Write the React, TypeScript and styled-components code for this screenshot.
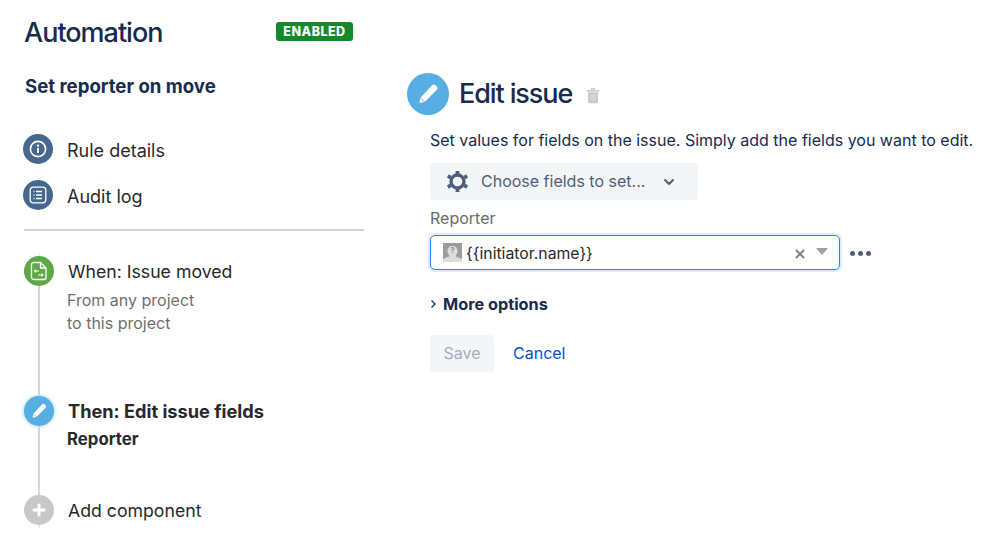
import React from "react";
import styled, { createGlobalStyle } from "styled-components";

const GlobalStyle = createGlobalStyle`
  html, body {
    margin: 0;
    padding: 0;
    background: #fff;
  }
  body {
    font-family: Inter, "Noto Sans", sans-serif;
    color: #172b4d;
  }
`;

const Page = styled.div`
  display: flex;
  width: 999px;
  height: 535px;
  overflow: hidden;
  box-sizing: border-box;
`;

const Sidebar = styled.aside`
  width: 340px;
  margin-left: 24px;
  flex: none;
  display: flex;
  flex-direction: column;
`;

const SidebarHead = styled.div`
  display: flex;
  align-items: center;
  justify-content: space-between;
  height: 32px;
  margin-top: 17px;
  padding-right: 11px;
`;

const PageTitle = styled.h1`
  margin: 0;
  font-size: 27px;
  line-height: 32px;
  font-weight: 500;
  letter-spacing: -1px;
  color: #172b4d;
`;

const Badge = styled.span`
  display: flex;
  align-items: center;
  justify-content: center;
  width: 77px;
  height: 19px;
  margin-top: -4px;
  border-radius: 3px;
  background: #14892c;
  color: #fff;
  font-size: 12.5px;
  font-weight: 800;
  letter-spacing: 0.5px;
`;

const RuleName = styled.h2`
  margin: 25px 0 0 1px;
  font-size: 18.6px;
  line-height: 24px;
  font-weight: 700;
  color: #172b4d;
`;

const NavList = styled.nav`
  display: flex;
  flex-direction: column;
  gap: 16px;
  margin: 36px 0 0 -1px;
`;

const NavItem = styled.div`
  display: flex;
  align-items: center;
  gap: 14px;
  height: 30px;
  font-size: 18px;
  color: #292929;
`;

const NavLabel = styled.span`
  padding-top: 2px;
`;

const NavDot = styled.span`
  width: 30px;
  height: 30px;
  flex: none;
  border-radius: 50%;
  background: #46688c;
  display: flex;
  align-items: center;
  justify-content: center;
`;

const Divider = styled.hr`
  width: 100%;
  height: 2px;
  margin: 19px 0 0;
  border: 0;
  background: #d2d2d2;
`;

const Timeline = styled.div`
  display: flex;
  flex-direction: column;
  margin: 22px 0 0;
`;

const Step = styled.div<{ $height: number }>`
  display: flex;
  gap: 14px;
  height: ${p => p.$height}px;
`;

const Rail = styled.div`
  width: 30px;
  flex: none;
  display: flex;
  flex-direction: column;
  align-items: center;
`;

const RailLine = styled.span`
  flex: 1;
  width: 2px;
  background: #d6d6d6;
`;

const RailStub = styled.span`
  height: 3px;
  flex: none;
  width: 1px;
  background: #e4e4e4;
`;

const StepDot = styled.span<{ $color: string; $glow?: boolean }>`
  width: 30px;
  height: 30px;
  flex: none;
  border-radius: 50%;
  background: ${p => p.$color};
  box-shadow: ${p => (p.$glow ? "0 0 3px 1px #b5def5" : "none")};
  display: flex;
  align-items: center;
  justify-content: center;
`;

const StepBody = styled.div<{ $top?: number }>`
  display: flex;
  flex-direction: column;
  padding-top: ${p => p.$top ?? 0}px;
`;

const StepTitle = styled.div<{ $bold?: boolean }>`
  height: 30px;
  font-size: ${p => (p.$bold ? 18.2 : 17.7)}px;
  line-height: 30px;
  font-weight: ${p => (p.$bold ? 700 : 400)};
  color: #292929;
`;

const StepNote = styled.div<{ $bold?: boolean }>`
  margin-left: -1px;
  margin-top: 2px;
  font-size: ${p => (p.$bold ? 16.8 : 16)}px;
  line-height: 23px;
  font-weight: ${p => (p.$bold ? 700 : 400)};
  color: ${p => (p.$bold ? "#292929" : "#6f6f6f")};
`;

const Main = styled.main`
  margin-left: 43px;
  flex: 1;
  display: flex;
  flex-direction: column;
`;

const EditorHead = styled.div`
  display: flex;
  align-items: center;
  height: 42px;
  margin-top: 73px;
`;

const EditorDot = styled.span`
  width: 42px;
  height: 42px;
  flex: none;
  border-radius: 50%;
  background: #57aee2;
  display: flex;
  align-items: center;
  justify-content: center;
`;

const EditorTitle = styled.h2`
  margin: 0 0 0 10px;
  font-size: 27px;
  line-height: 32px;
  font-weight: 500;
  letter-spacing: -1.1px;
  color: #172b4d;
`;

const TrashButton = styled.span`
  display: flex;
  margin: 2px 0 0 14px;
`;

const Form = styled.div`
  display: flex;
  flex-direction: column;
  align-items: flex-start;
  padding-left: 23px;
`;

const Description = styled.p`
  margin: 14px 0 0;
  font-size: 16px;
  line-height: 22px;
  white-space: nowrap;
  color: #172b4d;
`;

const ChooseButton = styled.div`
  display: flex;
  align-items: center;
  width: 268px;
  height: 37px;
  margin-top: 12px;
  padding-left: 16px;
  box-sizing: border-box;
  border-radius: 4px;
  background: #f4f5f7;
  color: #505f79;
  font-size: 16px;
`;

const ChooseLabel = styled.span`
  margin: 0 18px 2px 12px;
`;

const FieldLabel = styled.label`
  margin-top: 8px;
  font-size: 16px;
  line-height: 20px;
  color: #6b6b6b;
`;

const FieldRow = styled.div`
  display: flex;
  align-items: center;
  margin-top: 7px;
`;

const SelectBox = styled.div`
  display: flex;
  align-items: center;
  width: 410px;
  height: 35px;
  padding: 0 11px 0 12px;
  box-sizing: border-box;
  border: 1.5px solid #2684ff;
  border-radius: 5px;
  box-shadow: 0 0 0 2px #deebff;
  font-size: 15.8px;
  color: #292929;
`;

const SelectValue = styled.span`
  flex: 1;
  margin: 2px 0 0 4px;
`;

const MoreDots = styled.span`
  display: flex;
  gap: 3px;
  margin: 1px 0 0 10px;
`;

const Dot = styled.i`
  width: 5px;
  height: 5px;
  border-radius: 50%;
  background: #4d5f7d;
`;

const MoreOptions = styled.div`
  display: flex;
  align-items: center;
  gap: 6px;
  height: 24px;
  margin-top: 22px;
  font-size: 16.3px;
  font-weight: 700;
  color: #172b4d;
`;

const Actions = styled.div`
  display: flex;
  align-items: center;
  gap: 19px;
  margin-top: 19px;
`;

const SaveButton = styled.span`
  display: flex;
  align-items: center;
  justify-content: center;
  width: 64px;
  height: 37px;
  padding-bottom: 2px;
  box-sizing: border-box;
  border-radius: 4px;
  background: #f4f5f7;
  color: #a5adba;
  font-size: 16px;
`;

const CancelLink = styled.a`
  margin-bottom: 2px;
  font-size: 16px;
  color: #0052cc;
`;

const InfoIcon = () => (
  <svg width="20" height="20" viewBox="0 0 20 20" fill="none">
    <circle cx="10" cy="10" r="7.6" stroke="#fff" strokeWidth="1.6" />
    <circle cx="10" cy="6.6" r="1.2" fill="#fff" />
    <rect x="9" y="8.8" width="2" height="5.2" rx="0.6" fill="#fff" />
  </svg>
);

const ListIcon = () => (
  <svg width="20" height="20" viewBox="0 0 20 20" fill="none">
    <rect x="2.2" y="2.2" width="15.6" height="15.6" rx="3" stroke="#fff" strokeWidth="1.3" />
    <path d="M8 6.5h6M8 10h6M8 13.5h6" stroke="#fff" strokeWidth="1.3" />
    <path d="M5.5 6.5h1M5.5 10h1M5.5 13.5h1" stroke="#fff" strokeWidth="1.3" />
  </svg>
);

const MoveFileIcon = () => (
  <svg width="18" height="20" viewBox="0 0 18 20" fill="none">
    <path
      d="M3.5 1.5h7L16 7v9.5a2 2 0 0 1-2 2H3.5a2 2 0 0 1-2-2v-13a2 2 0 0 1 2-2zM10.5 1.5V7H16"
      stroke="#fff"
      strokeWidth="1.3"
      strokeLinejoin="round"
    />
    <path d="M9 10H4.5M6 8.6 4.500 10 6 11.4M8 14h5M11.500 12.6 13 14l-1.500 1.4" stroke="#fff" strokeWidth="1.1" />
  </svg>
);

const PencilIcon = ({ size }: { size: number }) => (
  <svg width={size} height={size} viewBox="0 0 20 20">
    <path
      d="M13.6 2.6a1.8 1.8 0 0 1 2.5 0l1.3 1.3a1.8 1.8 0 0 1 0 2.5L7.2 16.6l-4.4 1 .9-4.5z"
      fill="#fff"
    />
    <path d="M3.7 13.1l3.5 3.5" stroke="#57aee2" strokeWidth="0.8" />
  </svg>
);

const PlusIcon = () => (
  <svg width="14" height="14" viewBox="0 0 14 14">
    <path d="M7 2v10M2 7h10" stroke="#fff" strokeWidth="3" strokeLinecap="round" />
  </svg>
);

const TrashIcon = () => (
  <svg width="14" height="17" viewBox="0 0 16 18" preserveAspectRatio="none">
    <path d="M1 3.2h14v1.6H1zM5.6 1h4.8l.6 1.6H5z" fill="#c6c6c6" />
    <path d="M2.4 5.6h11.2v10a1.6 1.6 0 0 1-1.6 1.6H4a1.6 1.6 0 0 1-1.6-1.6z" fill="#c6c6c6" />
    <path d="M5.5 7.6v7.4M8 7.6v7.4M10.5 7.6v7.4" stroke="#e9e9e9" strokeWidth="0.9" />
  </svg>
);

const GearIcon = () => (
  <svg width="23" height="23" viewBox="0 0 22 22" fill="none">
    <circle cx="11" cy="11" r="6.2" stroke="#4d5f7d" strokeWidth="3.2" />
    <path
      d="M11 1v3M11 18v3M1.800 5.700l2.600 1.500M17.600 14.800l2.600 1.500M1.800 16.300l2.600-1.500M17.600 7.200l2.600-1.500"
      stroke="#4d5f7d"
      strokeWidth="3.6"
    />
  </svg>
);

const ChevronDown = () => (
  <svg width="12" height="8" viewBox="0 0 12 8" fill="none">
    <path d="M2 2l4 4 4-4" stroke="#4d5f7d" strokeWidth="2" strokeLinecap="round" strokeLinejoin="round" />
  </svg>
);

const ChevronRight = () => (
  <svg width="7" height="10" viewBox="0 0 7 10" fill="none">
    <path d="M1.5 1.5 5 5 1.5 8.5" stroke="#172b4d" strokeWidth="1.3" />
  </svg>
);

const AvatarIcon = () => (
  <svg width="19" height="19" viewBox="0 0 19 19" style={{ flex: "none" }}>
    <rect width="19" height="19" fill="#9c9c9c" />
    <path d="M0 19v-3l6-2.5V12a5 5 0 0 1-1.500-4C4.500 5 6.500 3 9.500 3s5 2 5 5a5 5 0 0 1-1.500 4v1.500l6 2.500v3z" fill="#dcdcdc" />
    <text x="9.5" y="10" fontSize="7" textAnchor="middle" fill="#8a8a8a" fontFamily="Inter, sans-serif" fontWeight="700">?</text>
  </svg>
);

const ClearIcon = () => (
  <svg width="12" height="12" viewBox="0 0 12 12" style={{ marginRight: 10, marginTop: 2 }}>
    <path d="M2 2l8 8M10 2l-8 8" stroke="#7d7d7d" strokeWidth="1.8" />
  </svg>
);

const Caret = () => (
  <svg width="12" height="7" viewBox="0 0 12 7" style={{ marginBottom: 3 }}>
    <path d="M0 0h12L6 7z" fill="#a0a0a0" />
  </svg>
);

export default function App() {
  return (
    <Page>
      <GlobalStyle />
      <Sidebar>
        <SidebarHead>
          <PageTitle>Automation</PageTitle>
          <Badge>ENABLED</Badge>
        </SidebarHead>
        <RuleName>Set reporter on move</RuleName>
        <NavList>
          <NavItem>
            <NavDot><InfoIcon /></NavDot>
            <NavLabel>Rule details</NavLabel>
          </NavItem>
          <NavItem>
            <NavDot><ListIcon /></NavDot>
            <NavLabel>Audit log</NavLabel>
          </NavItem>
        </NavList>
        <Divider />
        <Timeline>
          <Step $height={143}>
            <Rail>
              <RailStub />
              <StepDot $color="#5fa846"><MoveFileIcon /></StepDot>
              <RailLine />
            </Rail>
            <StepBody $top={4}>
              <StepTitle>When: Issue moved</StepTitle>
              <StepNote>From any project<br />to this project</StepNote>
            </StepBody>
          </Step>
          <Step $height={99}>
            <Rail>
              <StepDot $color="#57aee2" $glow><PencilIcon size={18} /></StepDot>
              <RailLine />
            </Rail>
            <StepBody>
              <StepTitle $bold>Then: Edit issue fields</StepTitle>
              <StepNote $bold>Reporter</StepNote>
            </StepBody>
          </Step>
          <Step $height={33}>
            <Rail>
              <StepDot $color="#c8c8c8"><PlusIcon /></StepDot>
              <RailStub />
            </Rail>
            <StepBody $top={1}>
              <StepTitle>Add component</StepTitle>
            </StepBody>
          </Step>
        </Timeline>
      </Sidebar>
      <Main>
        <EditorHead>
          <EditorDot><PencilIcon size={24} /></EditorDot>
          <EditorTitle>Edit issue</EditorTitle>
          <TrashButton><TrashIcon /></TrashButton>
        </EditorHead>
        <Form>
          <Description>Set values for fields on the issue. Simply add the fields you want to edit.</Description>
          <ChooseButton>
            <GearIcon />
            <ChooseLabel>Choose fields to set...</ChooseLabel>
            <ChevronDown />
          </ChooseButton>
          <FieldLabel>Reporter</FieldLabel>
          <FieldRow>
            <SelectBox>
              <AvatarIcon />
              <SelectValue>{"{{initiator.name}}"}</SelectValue>
              <ClearIcon />
              <Caret />
            </SelectBox>
            <MoreDots><Dot /><Dot /><Dot /></MoreDots>
          </FieldRow>
          <MoreOptions><ChevronRight />More options</MoreOptions>
          <Actions>
            <SaveButton>Save</SaveButton>
            <CancelLink>Cancel</CancelLink>
          </Actions>
        </Form>
      </Main>
    </Page>
  );
}
